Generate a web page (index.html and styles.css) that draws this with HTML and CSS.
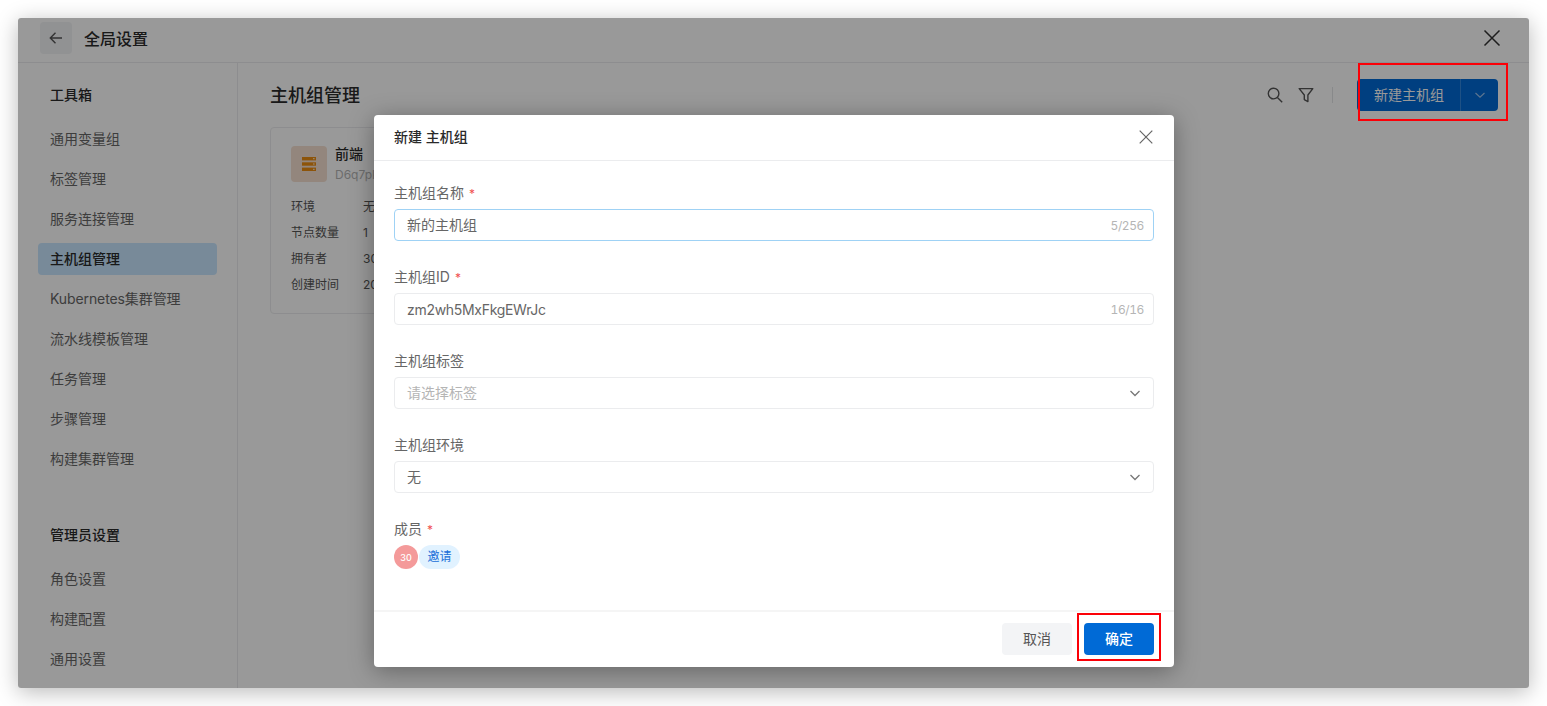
FILE: index.html
```html
<!DOCTYPE html>
<html lang="zh-CN">
<head>
    <meta charset="UTF-8">
    <title>全局设置</title>
    <link rel="stylesheet" href="styles.css">
</head>
<body>
    <div class="window">
        <header class="top-bar">
            <button class="back-button">
                <svg width="16" height="16" viewBox="0 0 16 16" fill="none" stroke="currentColor" stroke-width="1.4"><path d="M14 8H2.5M7.5 2.8 2.3 8l5.2 5.2"/></svg>
            </button>
            <span class="top-title">全局设置</span>
            <svg class="top-close" width="18" height="18" viewBox="0 0 18 18" fill="none" stroke="currentColor" stroke-width="1.5"><path d="M1.5 1.5l15 15M16.5 1.5l-15 15"/></svg>
        </header>
        <div class="content">
            <nav class="sidebar">
                <h3 class="side-title">工具箱</h3>
                <a class="side-item">通用变量组</a>
                <a class="side-item">标签管理</a>
                <a class="side-item">服务连接管理</a>
                <a class="side-item active">主机组管理</a>
                <a class="side-item kube">Kubernetes集群管理</a>
                <a class="side-item">流水线模板管理</a>
                <a class="side-item">任务管理</a>
                <a class="side-item">步骤管理</a>
                <a class="side-item">构建集群管理</a>
                <h3 class="side-title second">管理员设置</h3>
                <a class="side-item">角色设置</a>
                <a class="side-item">构建配置</a>
                <a class="side-item">通用设置</a>
            </nav>
            <main class="main">
                <div class="main-head">
                    <h2>主机组管理</h2>
                    <div class="tools">
                        <svg width="16" height="16" viewBox="0 0 16 16" fill="none" stroke="currentColor" stroke-width="1.4"><circle cx="6.6" cy="6.6" r="5.3"/><path d="M10.4 10.4 15.2 15.2"/></svg>
                        <svg width="16" height="16" viewBox="0 0 16 16" fill="none" stroke="currentColor" stroke-width="1.4" stroke-linejoin="round"><path d="M1.2 1.6h13.6L9.9 8v6.6L6.3 12.6V8z"/></svg>
                        <span class="tool-line"></span>
                        <div class="new-button">
                            <span class="new-label">新建主机组</span>
                            <span class="new-arrow">
                                <svg width="12" height="12" viewBox="0 0 12 12" fill="none" stroke="currentColor" stroke-width="1.2"><path d="M1.5 4 6 8.2 10.5 4"/></svg>
                            </span>
                        </div>
                    </div>
                </div>
                <div class="card">
                    <div class="card-head">
                        <div class="card-icon">
                            <svg width="14" height="14" viewBox="0 0 14 14" fill="#ec8c12"><rect y="0" width="14" height="3.4"/><rect y="5.3" width="14" height="3.4"/><rect y="10.6" width="14" height="3.4"/><g fill="#fdf0e0"><rect x="11" y="1.2" width="1.6" height="1"/><rect x="11" y="6.5" width="1.6" height="1"/><rect x="11" y="11.8" width="1.6" height="1"/></g></svg>
                        </div>
                        <div class="card-info">
                            <div class="card-name">前端</div>
                            <div class="card-id">D6q7pKmXnRtY</div>
                        </div>
                    </div>
                    <div class="card-row"><span>环境</span><span>无</span></div>
                    <div class="card-row"><span>节点数量</span><span>1</span></div>
                    <div class="card-row"><span>拥有者</span><span>30</span></div>
                    <div class="card-row"><span>创建时间</span><span>2022</span></div>
                </div>
            </main>
        </div>

        <div class="overlay">
            <div class="modal">
                <div class="modal-head">
                    <span class="modal-title">新建 主机组</span>
                    <svg width="14" height="14" viewBox="0 0 14 14" fill="none" stroke="currentColor" stroke-width="1.2"><path d="M.7.7l12.6 12.6M13.3.7.7 13.3"/></svg>
                </div>
                <div class="modal-body">
                    <div class="field">
                        <label>主机组名称<i>*</i></label>
                        <div class="input focused"><span class="cn">新的主机组</span><em>5/256</em></div>
                    </div>
                    <div class="field">
                        <label>主机组ID<i>*</i></label>
                        <div class="input"><span class="latin">zm2wh5MxFkgEWrJc</span><em>16/16</em></div>
                    </div>
                    <div class="field">
                        <label>主机组标签</label>
                        <div class="input"><span class="cn placeholder">请选择标签</span>
                            <svg class="select-arrow" width="12" height="12" viewBox="0 0 12 12" fill="none" stroke="currentColor" stroke-width="1.3"><path d="M1.5 4 6 8.5 10.5 4"/></svg>
                        </div>
                    </div>
                    <div class="field">
                        <label>主机组环境</label>
                        <div class="input"><span class="cn">无</span>
                            <svg class="select-arrow" width="12" height="12" viewBox="0 0 12 12" fill="none" stroke="currentColor" stroke-width="1.3"><path d="M1.5 4 6 8.5 10.5 4"/></svg>
                        </div>
                    </div>
                    <div class="field">
                        <label>成员<i>*</i></label>
                        <div class="members">
                            <span class="avatar">30</span>
                            <span class="invite">邀请</span>
                        </div>
                    </div>
                </div>
                <div class="modal-foot">
                    <button class="btn-cancel">取消</button>
                    <button class="btn-ok">确定</button>
                </div>
            </div>
        </div>

        <!-- red marks drawn on the screenshot -->
        <div class="mark mark-new"></div>
        <div class="mark mark-ok"></div>
    </div>
</body>
</html>
```

FILE: styles.css
```css
* {
    box-sizing: border-box;
}

html, body {
    height: 100%;
}

body {
    margin: 0;
    padding: 18px;
    background-color: #ffffff;
    color: #2a2a2a;
    font-family: Inter, "Noto Sans CJK SC", sans-serif;
    font-size: 14px;
    overflow: hidden;
}

.window {
    position: relative;
    width: 1511px;
    height: 670px;
    background-color: #ffffff;
    border-radius: 3px;
    box-shadow: 0 4px 22px rgba(0, 0, 0, 0.28);
    overflow: hidden;
}

/* top bar */
.top-bar {
    display: flex;
    align-items: center;
    height: 45px;
    padding: 0 28px 4px 22px;
    border-bottom: 1px solid #ebecee;
}

.back-button {
    display: flex;
    align-items: center;
    justify-content: center;
    width: 32px;
    height: 32px;
    padding: 0;
    border: none;
    border-radius: 4px;
    background-color: #f2f3f5;
    color: #555555;
}

.top-title {
    margin-left: 12px;
    font-size: 16px;
    font-weight: 500;
}

.top-close {
    margin-left: auto;
    color: #333333;
}

.content {
    display: flex;
    height: 625px;
}

/* sidebar */
.sidebar {
    flex: none;
    width: 220px;
    padding: 21px 20px 0;
    border-right: 1px solid #ebecee;
}

.side-title {
    height: 22px;
    margin: 0 0 17px;
    padding-left: 12px;
    font-size: 14px;
    font-weight: 500;
    line-height: 22px;
}

.side-title.second {
    margin-top: 49px;
}

.side-item {
    display: block;
    height: 32px;
    margin-bottom: 8px;
    padding-left: 12px;
    border-radius: 4px;
    color: #666666;
    line-height: 32px;
}

.side-item.kube {
    letter-spacing: -0.1px;
}

.side-item.active {
    background-color: #c9e7ff;
    color: #2a2a2a;
    font-weight: 500;
}

/* main */
.main {
    flex: 1;
    padding: 16px 31px 0 32px;
}

.main-head {
    display: flex;
    align-items: center;
    justify-content: space-between;
    height: 32px;
}

.main-head h2 {
    margin: -2px 0 0;
    font-size: 18px;
    font-weight: 500;
}

.tools {
    display: flex;
    align-items: center;
    color: #555555;
}

.tools svg + svg {
    margin-left: 15px;
}

.tool-line {
    width: 1px;
    height: 16px;
    margin: 0 24px 0 18px;
    background-color: #e3e4e6;
}

.new-button {
    display: flex;
    height: 32px;
    border-radius: 4px;
    background-color: #0069d6;
    color: #ffffff;
    line-height: 32px;
}

.new-label {
    width: 104px;
    padding-left: 17px;
    border-right: 1px solid rgba(255, 255, 255, 0.2);
}

.new-arrow {
    display: flex;
    align-items: center;
    justify-content: center;
    width: 37px;
    opacity: 0.6;
}

.card {
    width: 300px;
    height: 187px;
    margin-top: 16px;
    padding: 18px 20px;
    border: 1px solid #ebecee;
    border-radius: 4px;
}

.card-head {
    display: flex;
    gap: 8px;
    margin-bottom: 11px;
}

.card-icon {
    display: flex;
    align-items: center;
    justify-content: center;
    width: 36px;
    height: 36px;
    border-radius: 4px;
    background-color: #f5e0d0;
}

.card-info {
    margin-top: -2px;
}

.card-name {
    height: 19px;
    font-weight: 500;
    line-height: 19px;
}

.card-id {
    margin-top: 4px;
    color: #b5b5b5;
    font-size: 12px;
    line-height: 16px;
}

.card-row {
    display: flex;
    height: 26px;
    color: #555555;
    font-size: 12px;
    line-height: 26px;
}

.card-row span:first-child {
    width: 72px;
}

/* dialog */
.overlay {
    position: absolute;
    top: 0;
    left: 0;
    width: 100%;
    height: 100%;
    display: flex;
    justify-content: center;
    padding: 97px 0 0 1px;
    background-color: rgba(0, 0, 0, 0.4);
}

.modal {
    width: 800px;
    height: 552px;
    background-color: #ffffff;
    border-radius: 4px;
    box-shadow: 0 4px 24px rgba(0, 0, 0, 0.35);
    display: flex;
    flex-direction: column;
}

.modal-head {
    display: flex;
    align-items: center;
    justify-content: space-between;
    flex: none;
    height: 46px;
    padding: 0 21px 0 20px;
    border-bottom: 1px solid #ebecee;
    font-weight: 500;
}

.modal-title {
    margin-top: -3px;
}

.modal-head svg {
    margin-top: -2px;
    color: #666666;
}

.modal-body {
    flex: 1;
    padding: 21px 20px 0;
}

.field {
    height: 84px;
}

.field label {
    display: block;
    height: 22px;
    margin-bottom: 5px;
    color: #666666;
    line-height: 22px;
}

.field label i {
    margin-left: 5px;
    color: #f05050;
    font-size: 12px;
    font-style: normal;
}

.input {
    display: flex;
    align-items: center;
    justify-content: space-between;
    height: 32px;
    padding: 0 9px 0 12px;
    border: 1px solid #ebecee;
    border-radius: 4px;
    color: #666666;
}

.input.focused {
    border-color: #9fd2f5;
}

.input em {
    color: #b5b5b5;
    font-size: 12px;
    font-style: normal;
    font-variant-numeric: tabular-nums;
    letter-spacing: -0.4px;
}

.cn {
    margin-top: -2px;
}

.latin {
    letter-spacing: -0.3px;
}

.placeholder {
    color: #b5b5b5;
}

.select-arrow {
    margin-right: 3px;
    color: #777777;
}

.members {
    display: flex;
    align-items: center;
}

.avatar {
    display: flex;
    align-items: center;
    justify-content: center;
    width: 24px;
    height: 24px;
    border-radius: 50%;
    background-color: #f49a9a;
    color: #ffffff;
    font-size: 9px;
    font-weight: 500;
}

.invite {
    width: 41px;
    height: 24px;
    margin-left: 1px;
    border-radius: 12px;
    background-color: #e1f2ff;
    color: #1a6fd8;
    font-size: 12px;
    line-height: 24px;
    text-align: center;
}

.modal-foot {
    display: flex;
    align-items: center;
    justify-content: flex-end;
    gap: 12px;
    flex: none;
    height: 57px;
    padding: 0 20px 1px;
    border-top: 2px solid #f5f5f5;
}

.modal-foot button {
    width: 70px;
    height: 32px;
    padding: 0 0 2px;
    border: none;
    border-radius: 4px;
    font-family: inherit;
    font-size: 14px;
}

.btn-cancel {
    background-color: #f3f4f6;
    color: #555555;
}

.btn-ok {
    background-color: #006ad6;
    color: #ffffff;
    font-weight: 500;
}

/* annotation boxes */
.mark {
    position: absolute;
    border: 2px solid #fb0007;
}

.mark-new {
    top: 45px;
    left: 1340px;
    width: 150px;
    height: 58px;
}

.mark-ok {
    top: 595px;
    left: 1059px;
    width: 84px;
    height: 48px;
}
```
